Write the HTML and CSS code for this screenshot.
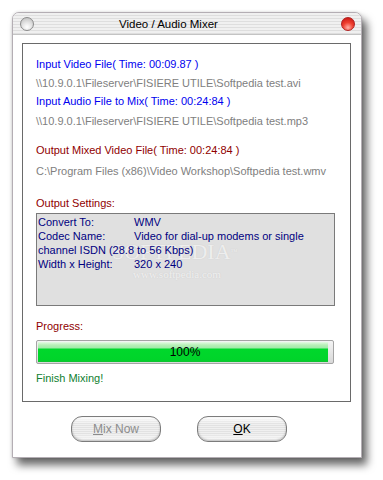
FILE: index.html
```html
<!DOCTYPE html>
<html>
<head>
<meta charset="utf-8">
<link rel="stylesheet" href="styles.css">
</head>
<body>
<div class="window">
  <div class="titlebar">
    <span class="light gray"></span>
    <span class="title">Video / Audio Mixer</span>
    <span class="light red"></span>
  </div>
  <div class="body">
    <div class="panel">
      <div class="line blue l1">Input Video File( Time: 00:09.87 )</div>
      <div class="line grey l2">\\10.9.0.1\Fileserver\FISIERE UTILE\Softpedia test.avi</div>
      <div class="line blue l3">Input Audio File to Mix( Time: 00:24:84 )</div>
      <div class="line grey l4">\\10.9.0.1\Fileserver\FISIERE UTILE\Softpedia test.mp3</div>
      <div class="line maroon l5">Output Mixed Video File( Time: 00:24:84 )</div>
      <div class="line grey l6">C:\Program Files (x86)\Video Workshop\Softpedia test.wmv</div>
      <div class="line maroon l7">Output Settings:</div>
      <div class="settings">
        <div class="watermark">SOFTPEDIA<span class="tm">™</span><div class="wm-url">www.softpedia.com</div></div>
        <div class="srow"><span class="lbl">Convert To:</span><span>WMV</span></div>
        <div class="srow"><span class="lbl">Codec Name:</span><span>Video for dial-up modems or single</span></div>
        <div class="srow"><span>channel ISDN (28.8 to 56 Kbps)</span></div>
        <div class="srow"><span class="lbl">Width x Height:</span><span>320 x 240</span></div>
      </div>
      <div class="line maroon l8">Progress:</div>
      <div class="progress">
        <div class="fill"></div>
        <span class="pct">100%</span>
      </div>
      <div class="line green l9">Finish Mixing!</div>
    </div>
    <div class="buttons">
      <div class="btn disabled"><span><u>M</u>ix Now</span></div>
      <div class="btn"><span><u>O</u>K</span></div>
    </div>
  </div>
</div>
</body>
</html>
```

FILE: styles.css
```css
html, body {
  margin: 0;
  padding: 0;
  background: #ffffff;
  width: 383px;
  height: 480px;
  overflow: hidden;
  font-family: "Liberation Sans", Arial, sans-serif;
}

.window {
  margin: 12px 0 0 12px;
  width: 348px;
  height: 444px;
  border: 1px solid #b4aeb4;
  border-radius: 7px 7px 0 0;
  background: #ffffff;
  box-shadow: 5px 7px 9px rgba(0, 0, 0, 0.6), 0 0 3px rgba(0, 0, 0, 0.15);
  display: flex;
  flex-direction: column;
  overflow: hidden;
}

.titlebar {
  height: 21px;
  flex: none;
  border-bottom: 1px solid #c4c4c4;
  background: repeating-linear-gradient(to bottom, #f0f0f0 0px, #f0f0f0 2px, #dedede 2px, #dedede 3px);
  display: flex;
  align-items: center;
  padding: 0 6px 0 7px;
}

.light {
  width: 12px;
  height: 12px;
  border-radius: 50%;
  flex: none;
}
.light.gray {
  border: 1px solid #8a8a8a;
  background: radial-gradient(circle at 50% 75%, #ffffff 0%, #e6e6e6 40%, #b8b8b8 100%);
}
.light.red {
  border: 1px solid #b02020;
  background: radial-gradient(circle at 50% 80%, #ffb0a8 0%, #f04030 45%, #c01010 100%);
}

.title {
  flex: 1;
  font-size: 11.5px;
  color: #000;
  padding-left: 85px;
  line-height: 14px;
  margin-top: 1px;
}

.body {
  flex: 1;
  display: flex;
  flex-direction: column;
  padding: 8px 10px 0 9px;
}

.panel {
  height: 359px;
  border: 1px solid #6a6a6a;
  padding: 14px 0 0 13px;
  box-sizing: border-box;
  flex: none;
}

.line {
  font-size: 11px;
  line-height: 13px;
  white-space: nowrap;
}
.blue { color: #0000f0; }
.grey { color: #808080; }
.maroon { color: #900000; }
.green { color: #108030; }

.l2 { margin-top: 6px; }
.l3 { margin-top: 5px; }
.l4 { margin-top: 7px; }
.l5 { margin-top: 16px; }
.l6 { margin-top: 8px; }
.l7 { margin-top: 19px; }

.settings {
  margin-top: 3px;
  width: 299px;
  height: 93px;
  box-sizing: border-box;
  border: 1px solid #7a7a7a;
  background: #e0e0e0;
  padding: 1px 4px 0 1px;
  position: relative;
  color: #000080;
  font-size: 11px;
  line-height: 14px;
}
.srow {
  position: relative;
  display: flex;
  white-space: nowrap;
}
.lbl {
  width: 96px;
  flex: none;
}
.watermark {
  position: absolute;
  left: 75px;
  top: 28px;
  font-family: "Liberation Serif", serif;
  font-size: 22px;
  color: rgba(255, 255, 255, 0.7);
  text-shadow: 0 0 1px rgba(140, 140, 140, 0.3);
  line-height: 20px;
  white-space: nowrap;
}
.tm { font-size: 7px; vertical-align: top; }
.wm-url {
  font-size: 11px;
  margin: 6px 0 0 21px;
  line-height: 12px;
}

.l8 { margin-top: 14px; }

.progress {
  margin-top: 7px;
  width: 298px;
  height: 24px;
  box-sizing: border-box;
  border: 1px solid #a4a4a4;
  border-radius: 2px;
  background: linear-gradient(to bottom, #f4f4f4, #d8d8d8);
  position: relative;
  padding: 1px;
}
.fill {
  width: 290px;
  height: 100%;
  background: linear-gradient(to bottom, #e6fae6 0px, #b8f0b8 3px, #a0eaa8 6px, #00d82c 7px, #00d42a 18px, #10c030 20px);
}
.pct {
  position: absolute;
  left: 0;
  right: 0;
  top: 5px;
  text-align: center;
  font-size: 12px;
  line-height: 13px;
  color: #000;
}

.l9 { margin-top: 8px; }

.buttons {
  display: flex;
  gap: 36px;
  padding: 14px 0 0 49px;
}
.btn {
  width: 88px;
  height: 24px;
  border: 1px solid #7c7c7c;
  border-radius: 11px;
  background:
    linear-gradient(to bottom, rgba(255,255,255,0.9) 0px, rgba(255,255,255,0) 7px, rgba(255,255,255,0) 17px, rgba(255,255,255,0.8) 24px),
    repeating-linear-gradient(to bottom, #e2e2e2 0px, #e2e2e2 1px, #f0f0f0 1px, #f0f0f0 2px);
  box-shadow: inset 0 -1px 2px rgba(0,0,0,0.25);
  display: flex;
  align-items: center;
  justify-content: center;
  font-size: 12px;
  color: #000;
}
.btn.disabled { color: #8c8c8c; }
.btn u { text-underline-offset: 1px; }
```
